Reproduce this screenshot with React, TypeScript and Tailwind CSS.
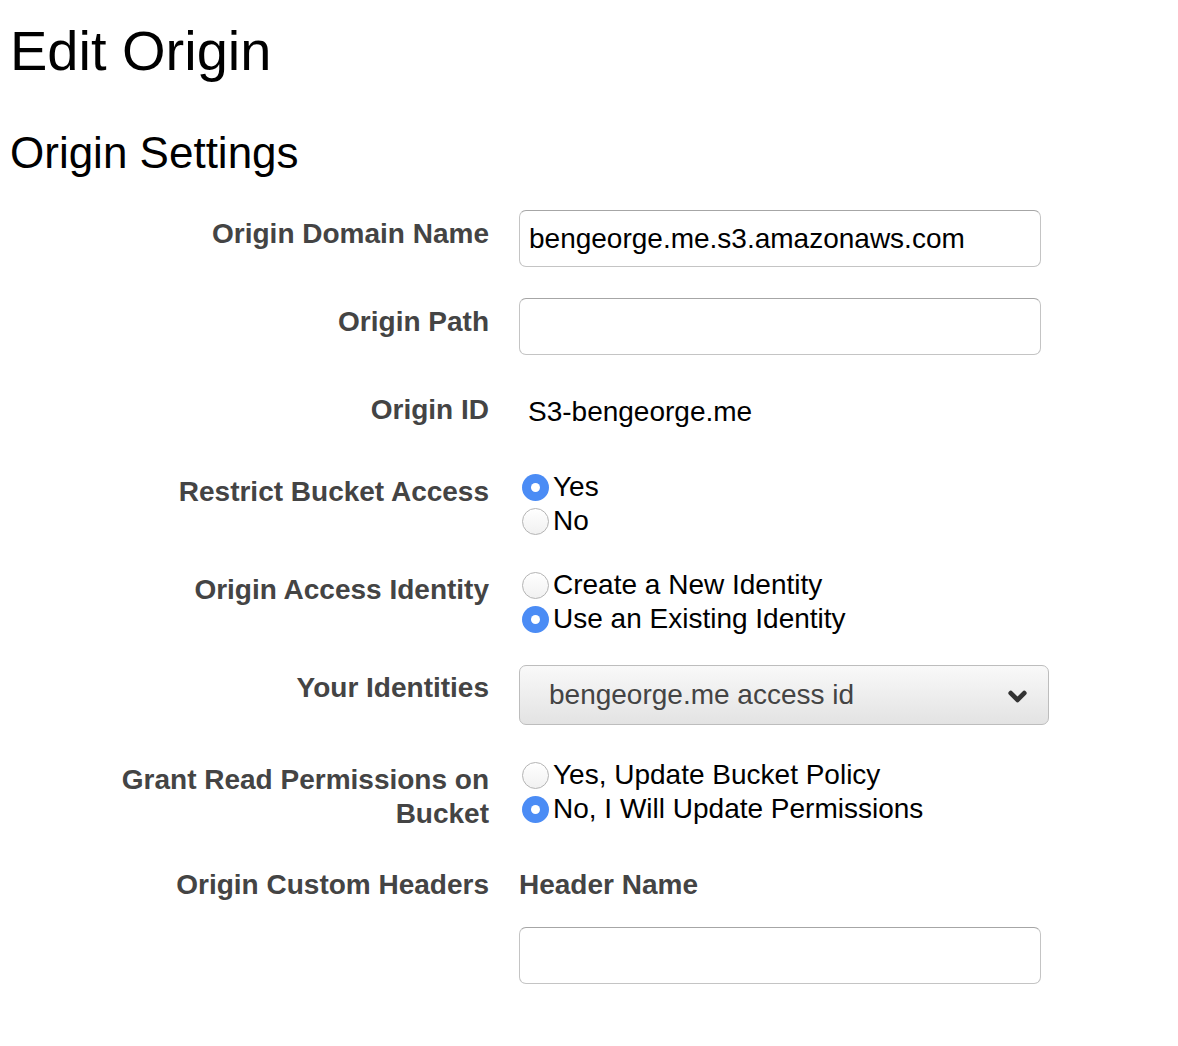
import React from 'react';
import { ChevronDown } from 'lucide-react';

const Radio: React.FC<{ checked?: boolean; label: string }> = ({ checked, label }) => (
  <label className="flex items-center h-[34px] leading-[34px] text-[28px] text-black">
    {checked ? (
      <span className="ml-[3px] mr-[4px] w-[27px] h-[27px] rounded-full bg-[#4b8cf5] flex items-center justify-center">
        <span className="w-[9px] h-[9px] rounded-full bg-white" />
      </span>
    ) : (
      <span className="ml-[3px] mr-[4px] w-[27px] h-[27px] rounded-full border border-[#b4b4b4] bg-gradient-to-b from-white to-[#f1f1f1]" />
    )}
    {label}
  </label>
);

const TextInput: React.FC<{ value?: string }> = ({ value }) => (
  <div className="h-[57px] w-[522px] rounded-[7px] border-[1.5px] border-[#c4c4c4] border-t-[#a6a6a6] bg-white flex items-center pl-[9px] text-[28px] text-black">
    {value}
  </div>
);

const Row: React.FC<{ label: string; labelPad: string; className?: string; children: React.ReactNode }> = ({
  label,
  labelPad,
  className,
  children,
}) => (
  <div className={`flex items-start ${className ?? ''}`}>
    <div className={`w-[489px] pl-[89px] text-right text-[28px] leading-[34px] font-bold text-[#444] ${labelPad}`}>
      {label}
    </div>
    <div className="ml-[30px]">{children}</div>
  </div>
);

const App: React.FC = () => {
  return (
    <div className="min-h-screen bg-white font-['Liberation_Sans',Arial,sans-serif]">
      <h1 className="pl-[10px] pt-[23px] text-[56px] leading-[56px] text-black">Edit Origin</h1>
      <h2 className="pl-[10px] mt-[52px] text-[44px] leading-[44px] text-black">Origin Settings</h2>

      <div className="mt-[35px]">
        <Row label="Origin Domain Name" labelPad="pt-[7px]">
          <TextInput value="bengeorge.me.s3.amazonaws.com" />
        </Row>

        <Row label="Origin Path" labelPad="pt-[7px]" className="mt-[31px]">
          <TextInput />
        </Row>

        <Row label="Origin ID" labelPad="pt-0" className="mt-[38px]">
          <div className="pt-[2px] pl-[9px] text-[28px] leading-[34px] text-black">S3-bengeorge.me</div>
        </Row>

        <Row label="Restrict Bucket Access" labelPad="pt-[5px]" className="mt-[41px]">
          <Radio checked label="Yes" />
          <Radio label="No" />
        </Row>

        <Row label="Origin Access Identity" labelPad="pt-[5px]" className="mt-[30px]">
          <Radio label="Create a New Identity" />
          <Radio checked label="Use an Existing Identity" />
        </Row>

        <Row label="Your Identities" labelPad="pt-[6px]" className="mt-[29px]">
          <div className="h-[60px] w-[530px] rounded-[7px] border border-[#bdbdbd] bg-gradient-to-b from-[#f9f9f9] to-[#e3e3e3] flex items-center justify-between pl-[29px] pr-[17px] text-[28px] text-[#444]">
            <span>bengeorge.me access id</span>
            <ChevronDown size={27} strokeWidth={4.2} className="text-[#333] mt-[3px]" />
          </div>
        </Row>

        <Row label="Grant Read Permissions on Bucket" labelPad="pt-[5px]" className="mt-[33px]">
          <Radio label="Yes, Update Bucket Policy" />
          <Radio checked label="No, I Will Update Permissions" />
        </Row>

        <Row label="Origin Custom Headers" labelPad="pt-0" className="mt-[37px]">
          <div className="text-[28px] leading-[34px] font-bold text-[#444]">Header Name</div>
          <div className="mt-[25px]">
            <TextInput />
          </div>
        </Row>
      </div>
    </div>
  );
};

export default App;
